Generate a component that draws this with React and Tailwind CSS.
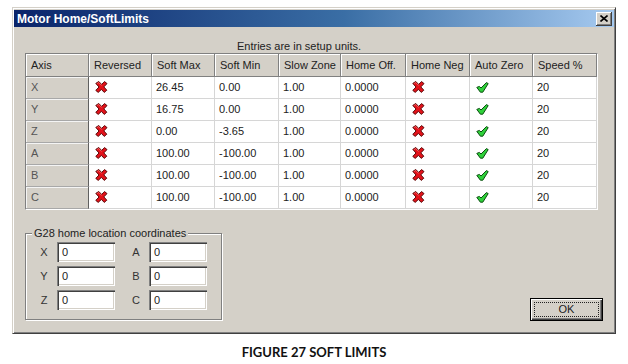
import React from "react";

const F = { fontFamily: '"Liberation Sans", Arial, sans-serif' };

function RedX() {
  return (
    <svg width="13" height="12" viewBox="0 0 13 12">
      <path
        d="M0.8 2.4 L3.8 0.5 L6.6 3.4 L9.6 0.6 L12 2.6 L8.8 5.9 L11.8 9.2 L9.2 11.4 L6.4 8.4 L3.2 11.4 L0.8 9.4 L4 6 Z"
        fill="#e3121a"
        stroke="#5a0a0a"
        strokeWidth="1"
        strokeLinejoin="round"
      />
      <path d="M2.2 2.5 L3.7 1.5 L6.6 4.5" fill="none" stroke="#ff7070" strokeWidth="0.8" />
    </svg>
  );
}

function GreenCheck() {
  return (
    <svg width="13" height="11" viewBox="0 0 13 11">
      <path
        d="M0.8 5.4 L3.4 4.4 L5 6 L10.4 0.6 L12.2 1.6 L6.8 10.2 L4.4 10.2 Z"
        fill="#2fd13a"
        stroke="#0b4d10"
        strokeWidth="1"
        strokeLinejoin="round"
      />
    </svg>
  );
}

const headers = ["Axis", "Reversed", "Soft Max", "Soft Min", "Slow Zone", "Home Off.", "Home Neg", "Auto Zero", "Speed %"];

const rows = [
  ["X", "26.45", "0.00"],
  ["Y", "16.75", "0.00"],
  ["Z", "0.00", "-3.65"],
  ["A", "100.00", "-100.00"],
  ["B", "100.00", "-100.00"],
  ["C", "100.00", "-100.00"],
];

function HeadCell({ children }) {
  return (
    <div className="h-[23px] flex items-center pl-[5px] bg-[#d4d0c8] border-r border-b border-[#808080] shadow-[inset_1px_1px_0_#ffffff] text-[11px] text-[#222]">
      {children}
    </div>
  );
}

function AxisCell({ children }) {
  return (
    <div className="h-[22px] flex items-center pl-[5px] bg-[#d4d0c8] border-r border-r-[#606060] border-b border-b-[#a8a8a8] shadow-[inset_1px_1px_0_#f4f4f4] text-[11px] text-[#555]">
      {children}
    </div>
  );
}

function Cell({ children, icon }) {
  return (
    <div
      className={
        "h-[22px] flex bg-white border-r border-b border-[#d6d6d6] text-[11px] text-[#222] " +
        (icon ? "items-start pt-[4px] pl-[6px]" : "items-center pl-[4px]")
      }
    >
      {children}
    </div>
  );
}

function Field({ label }) {
  return (
    <div className="flex items-center">
      <div className="w-[14px] text-center text-[11px] text-[#333]">{label}</div>
      <div className="ml-[6px] w-[58px] h-[20px] bg-white flex items-center pl-[5px] text-[11px] text-[#222] shadow-[inset_1px_1px_0_#808080,inset_2px_2px_0_#404040,inset_-1px_-1px_0_#ffffff,inset_-2px_-2px_0_#d4d0c8]">
        0
      </div>
    </div>
  );
}

export default function App() {
  return (
    <div className="w-[628px] h-[364px] bg-white overflow-hidden" style={F}>
      <div className="ml-[12px] mt-[7px] w-[604px] h-[327px] bg-[#d4d0c8] border border-t-[#d4d0c8] border-l-[#d4d0c8] border-r-[#404040] border-b-[#404040] shadow-[inset_1px_1px_0_#ffffff,inset_-1px_-1px_0_#808080] pt-[2px] px-[1px] flex flex-col">
        {/* Title bar */}
        <div className="h-[17px] flex items-center justify-between bg-[linear-gradient(to_right,#0a246a,#3a6ea5_55%,#a6caf0)]">
          <div className="pl-[3px] text-[12px] font-bold text-white leading-none">Motor Home/SoftLimits</div>
          <div className="mr-[2px] w-[16px] h-[14px] bg-[#d4d0c8] flex items-center justify-center shadow-[inset_-1px_-1px_0_#404040,inset_1px_1px_0_#ffffff,inset_-2px_-2px_0_#808080]">
            <svg width="8" height="7" viewBox="0 0 8 7">
              <path d="M0.5 0.5 L7.5 6.5 M7.5 0.5 L0.5 6.5" stroke="#000" strokeWidth="1.6" />
            </svg>
          </div>
        </div>

        <div className="px-[11px]">
          <div className="mt-[13px] h-[13px] pl-[212px] text-[11px] leading-[13px] text-[#222]">
            Entries are in setup units.
          </div>

          {/* Table */}
          <div className="w-[573px] border border-t-[#808080] border-l-[#808080] border-r-white border-b-white">
            <div className="grid grid-cols-[63px_63px_63px_64px_62px_65px_64px_63px_64px]">
              {headers.map((h) => (
                <HeadCell key={h}>{h}</HeadCell>
              ))}
              {rows.map(([ax, max, min]) => (
                <React.Fragment key={ax}>
                  <AxisCell>{ax}</AxisCell>
                  <Cell icon>
                    <RedX />
                  </Cell>
                  <Cell>{max}</Cell>
                  <Cell>{min}</Cell>
                  <Cell>1.00</Cell>
                  <Cell>0.0000</Cell>
                  <Cell icon>
                    <RedX />
                  </Cell>
                  <Cell icon>
                    <div className="pt-[1px]">
                      <GreenCheck />
                    </div>
                  </Cell>
                  <Cell>20</Cell>
                </React.Fragment>
              ))}
            </div>
          </div>

          {/* Bottom area */}
          <div className="mt-[23px] flex items-start justify-between">
            <div className="relative w-[197px] h-[87px] border border-[#808080] shadow-[inset_1px_1px_0_#ffffff,1px_1px_0_#ffffff] pt-[8px] pl-[11px]">
              <div className="absolute top-[-8px] left-[6px] px-[2px] bg-[#d4d0c8] text-[11px] leading-[14px] text-[#222]">
                G28 home location coordinates
              </div>
              <div className="flex gap-[14px]">
                <div className="flex flex-col gap-[4px]">
                  <Field label="X" />
                  <Field label="Y" />
                  <Field label="Z" />
                </div>
                <div className="flex flex-col gap-[4px]">
                  <Field label="A" />
                  <Field label="B" />
                  <Field label="C" />
                </div>
              </div>
            </div>

            <div className="mt-[65px] w-[73px] h-[23px] border border-black bg-[#d4d0c8] shadow-[inset_1px_1px_0_#ffffff,inset_-1px_-1px_0_#404040,inset_-2px_-2px_0_#808080] p-[3px]">
              <div className="w-full h-full border border-dotted border-[#222] flex items-center justify-center text-[11px] text-[#222] leading-none">
                OK
              </div>
            </div>
          </div>
        </div>
      </div>

      <div className="mt-[11px] text-center text-[13px] leading-[15px] font-bold text-[#111]" style={{ fontFamily: 'Lato, "DejaVu Sans", sans-serif' }}>
        FIGURE 27 SOFT LIMITS
      </div>
    </div>
  );
}
